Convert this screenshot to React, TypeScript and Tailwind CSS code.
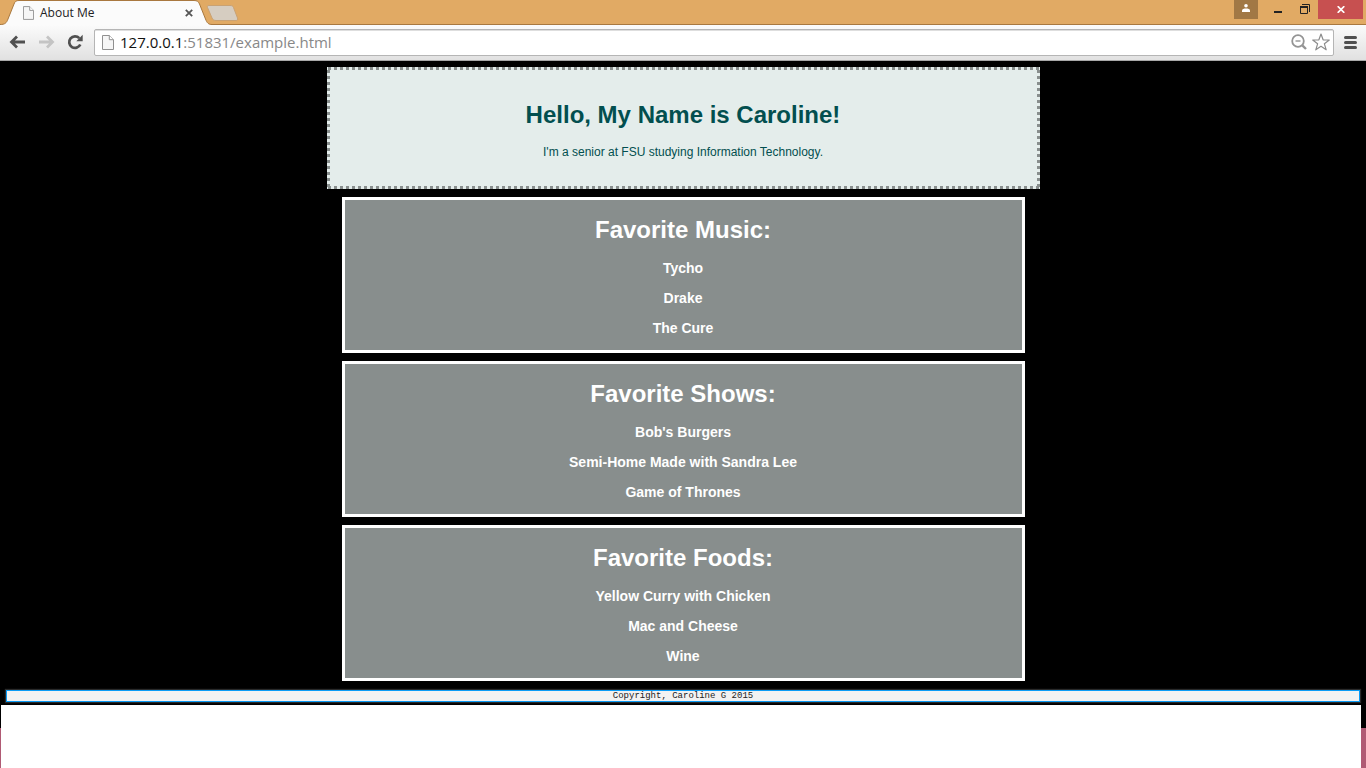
type Favorite = { title: string; items: string[] };

const favorites: Favorite[] = [
  { title: "Favorite Music:", items: ["Tycho", "Drake", "The Cure"] },
  {
    title: "Favorite Shows:",
    items: ["Bob's Burgers", "Semi-Home Made with Sandra Lee", "Game of Thrones"],
  },
  {
    title: "Favorite Foods:",
    items: ["Yellow Curry with Chicken", "Mac and Cheese", "Wine"],
  },
];

function PageIcon({ className }: { className: string }) {
  return (
    <svg viewBox="0 0 12 15" className={className} aria-hidden="true">
      <path d="M.5.5h6.8l4.2 4.2v9.8H.5z" fill="#f6f6f6" stroke="#909090" />
      <path d="M7.3.5v4.2h4.2" fill="#fff" stroke="#909090" />
    </svg>
  );
}

function TitleBar() {
  return (
    <div className="flex h-[25px] items-start justify-between bg-[#e1aa64] shadow-[inset_0_-1px_0_#a9783f]">
      <div className="relative flex h-[25px] w-[240px] items-center">
        <svg
          viewBox="0 0 240 25"
          className="absolute inset-0 h-[25px] w-[240px]"
          aria-hidden="true"
        >
          <path
            d="M0 24.5C5 24.5 6.500 23 8 19L14 4C15 1.500 16 .5 19 .5H194C197 .5 198.500 1.500 199.500 4L205.500 19C207 23 208.500 24.500 212 24.500V25H0z"
            fill="#fbfbfb"
          />
          <path
            d="M0 24.500C5 24.500 6.500 23 8 19L14 4C15 1.500 16 .5 19 .5H194C197 .5 198.500 1.500 199.500 4L205.500 19C207 23 208.500 24.500 212 24.500H240"
            fill="none"
            stroke="#a9783f"
          />
          <path
            d="M209 5.500H230C232 5.500 233 6 233.500 7.500L237.500 18C238 19.500 237.500 20.500 236 20.500H216C214 20.500 212.500 19.500 212 18L207.500 7.500C207 6 207.500 5.500 209 5.500z"
            fill="#d6cdc1"
            stroke="#c9a274"
          />
        </svg>
        <div className="relative flex items-center pl-[23px]">
          <PageIcon className="h-[14px] w-[11px]" />
          <span className="w-[151px] pl-[6px] font-['Open_Sans','Noto_Sans',sans-serif] text-xs leading-4 text-[#222]">
            About Me
          </span>
          <button type="button" aria-label="Close tab">
            <svg viewBox="0 0 8 8" className="h-2 w-2" aria-hidden="true">
              <path d="M.8.8l6.400 6.400M7.200.8L.8 7.200" stroke="#555" strokeWidth="1.800" />
            </svg>
          </button>
        </div>
      </div>
      <div className="flex pr-[3px]">
        <button
          type="button"
          aria-label="Profile"
          className="flex h-[19px] w-6 items-center justify-center bg-[#a17845]"
        >
          <svg viewBox="0 0 8 8" className="mb-[3px] h-2 w-2" aria-hidden="true">
            <circle cx="4" cy="1.800" r="1.800" fill="#fff" />
            <path d="M0 8V6.500C0 5 2 4.500 4 4.500S8 5 8 6.500V8z" fill="#fff" />
          </svg>
        </button>
        <button
          type="button"
          aria-label="Minimize"
          className="ml-[7px] flex h-[19px] w-[26px] items-center justify-center"
        >
          <svg viewBox="0 0 8 2" className="mt-[5px] h-[2px] w-2" aria-hidden="true">
            <path d="M0 0h8v2H0z" fill="#222" />
          </svg>
        </button>
        <button
          type="button"
          aria-label="Restore"
          className="flex h-[19px] w-[27px] items-center justify-center"
        >
          <svg viewBox="0 0 10 10" className="mb-px h-[10px] w-[10px]" aria-hidden="true">
            <path d="M2 .5h7.500V8" fill="none" stroke="#222" />
            <path d="M.5 3v6.500h7V3" fill="none" stroke="#222" />
            <path d="M0 2h8v2H0z" fill="#222" />
          </svg>
        </button>
        <button
          type="button"
          aria-label="Close window"
          className="flex h-[19px] w-[45px] items-center justify-center bg-[#c75050]"
        >
          <svg viewBox="0 0 8 7" className="h-[7px] w-2" aria-hidden="true">
            <path d="M.7.2l6.600 6.600M7.300.2L.7 6.800" stroke="#fff" strokeWidth="1.700" />
          </svg>
        </button>
      </div>
    </div>
  );
}

function Toolbar() {
  return (
    <div className="flex h-9 items-center border-b border-[#a8a8a8] bg-linear-to-b from-[#fbfbfb] to-[#e1e1e1] pr-[9px] pb-px pl-[9px]">
      <button type="button" aria-label="Back">
        <svg viewBox="0 0 16 14" className="h-[14px] w-4" aria-hidden="true">
          <path
            d="M8 1.500L2.500 7L8 12.500M2.500 7H16"
            fill="none"
            stroke="#505050"
            strokeWidth="2.800"
          />
        </svg>
      </button>
      <button type="button" aria-label="Forward" className="ml-[14px]">
        <svg viewBox="0 0 16 14" className="h-[14px] w-4" aria-hidden="true">
          <path
            d="M8 1.500L13.500 7L8 12.500M13.500 7H0"
            fill="none"
            stroke="#c4c4c4"
            strokeWidth="2.800"
          />
        </svg>
      </button>
      <button type="button" aria-label="Reload" className="ml-3">
        <svg viewBox="0 0 16 16" className="h-4 w-4" aria-hidden="true">
          <path
            d="M12.300 4.200A5.800 5.800 0 1 0 13.300 10.500"
            fill="none"
            stroke="#505050"
            strokeWidth="2.700"
          />
          <path d="M15.700 .8V7.200H9.300z" fill="#505050" />
        </svg>
      </button>
      <div className="ml-[11px] flex h-[27px] grow items-center rounded-xs border border-[#b5b5b5] bg-white pr-[3px] pl-[7px] shadow-[inset_0_1px_0_#dedede]">
        <PageIcon className="h-[15px] w-3" />
        <div className="relative ml-[6px] grow font-['Open_Sans','Noto_Sans',sans-serif] text-[15px] leading-5">
          <div
            aria-hidden="true"
            className="pointer-events-none absolute inset-0 whitespace-nowrap text-[#888]"
          >
            <span className="text-[#111]">127.0.0.1</span>:51831/example.html
          </div>
          <input
            aria-label="Address"
            defaultValue="127.0.0.1:51831/example.html"
            className="block w-full bg-transparent text-transparent outline-none"
          />
        </div>
        <button type="button" aria-label="Zoom out">
          <svg viewBox="0 0 16 16" className="h-4 w-4" aria-hidden="true">
            <circle cx="7" cy="7" r="5.800" fill="none" stroke="#949494" strokeWidth="1.800" />
            <path d="M4.500 7h5" stroke="#949494" strokeWidth="1.400" />
            <path d="M11.300 11.300L15 15" stroke="#949494" strokeWidth="2.400" />
          </svg>
        </button>
        <button type="button" aria-label="Bookmark" className="ml-[5px]">
          <svg viewBox="0 0 18 18" className="h-[18px] w-[18px]" aria-hidden="true">
            <path
              d="M9 1L11.100 6.800L17.300 7L12.400 10.800L14.200 16.800L9 13.300L3.800 16.800L5.600 10.800L.7 7L6.900 6.800z"
              fill="#fff"
              stroke="#8c8c8c"
              strokeWidth="1.200"
              strokeLinejoin="round"
            />
          </svg>
        </button>
      </div>
      <button type="button" aria-label="Menu" className="ml-[10px]">
        <svg viewBox="0 0 13 13" className="h-[13px] w-[13px]" aria-hidden="true">
          <path
            d="M1.500 1.500h10M1.500 6.500h10M1.500 11.500h10"
            stroke="#505050"
            strokeWidth="3"
            strokeLinecap="round"
          />
        </svg>
      </button>
    </div>
  );
}

function Intro() {
  return (
    <header className="mx-auto w-[calc(50%+30px)] bg-[#e4edeb] bg-[linear-gradient(90deg,#888e8d_50%,transparent_50%),linear-gradient(90deg,#888e8d_50%,transparent_50%),linear-gradient(#888e8d_50%,transparent_50%),linear-gradient(#888e8d_50%,transparent_50%)] [background-position:1px_0,1px_100%,0_3px,100%_3px] [background-repeat:repeat-x,repeat-x,repeat-y,repeat-y] [background-size:6px_3px,6px_3px,3px_6px,3px_6px] px-4 pt-[34px] pb-[30px] text-center text-[#024f4f]">
      <h1 className="text-2xl leading-7 font-bold">Hello, My Name is Caroline!</h1>
      <p className="mt-4 text-xs leading-[14px]">
        I'm a senior at FSU studying Information Technology.
      </p>
    </header>
  );
}

function FavoriteCard({ title, items }: Favorite) {
  return (
    <section className="mx-auto w-1/2 border-3 border-white bg-[#888e8d] px-4 pt-4 pb-[14px] text-center font-bold text-white">
      <h2 className="text-2xl leading-7">{title}</h2>
      <ul className="mt-4 flex flex-col gap-[14px] text-sm leading-4">
        {items.map((item) => (
          <li key={item}>{item}</li>
        ))}
      </ul>
    </section>
  );
}

export default function App() {
  return (
    <div className="flex min-h-screen flex-col bg-black font-['Liberation_Sans',Arial,sans-serif]">
      <TitleBar />
      <Toolbar />
      <main className="flex flex-col gap-2 pt-[6px]">
        <Intro />
        {favorites.map((favorite) => (
          <FavoriteCard key={favorite.title} {...favorite} />
        ))}
      </main>
      <footer className="mx-[6px] mt-[9px] mb-[3px] border border-[#0a9bf5] bg-[#f2f2f2] text-center font-['Liberation_Mono',monospace] text-[9px] leading-[10px] text-[#222] shadow-[0_0_1px_1px_#2a2a2a]">
        Copyright, Caroline G 2015
      </footer>
      <div className="flex grow bg-[linear-gradient(#000_23px,#b05a74_23px)] pr-[5px] pl-px">
        <div className="grow bg-white" />
      </div>
    </div>
  );
}
